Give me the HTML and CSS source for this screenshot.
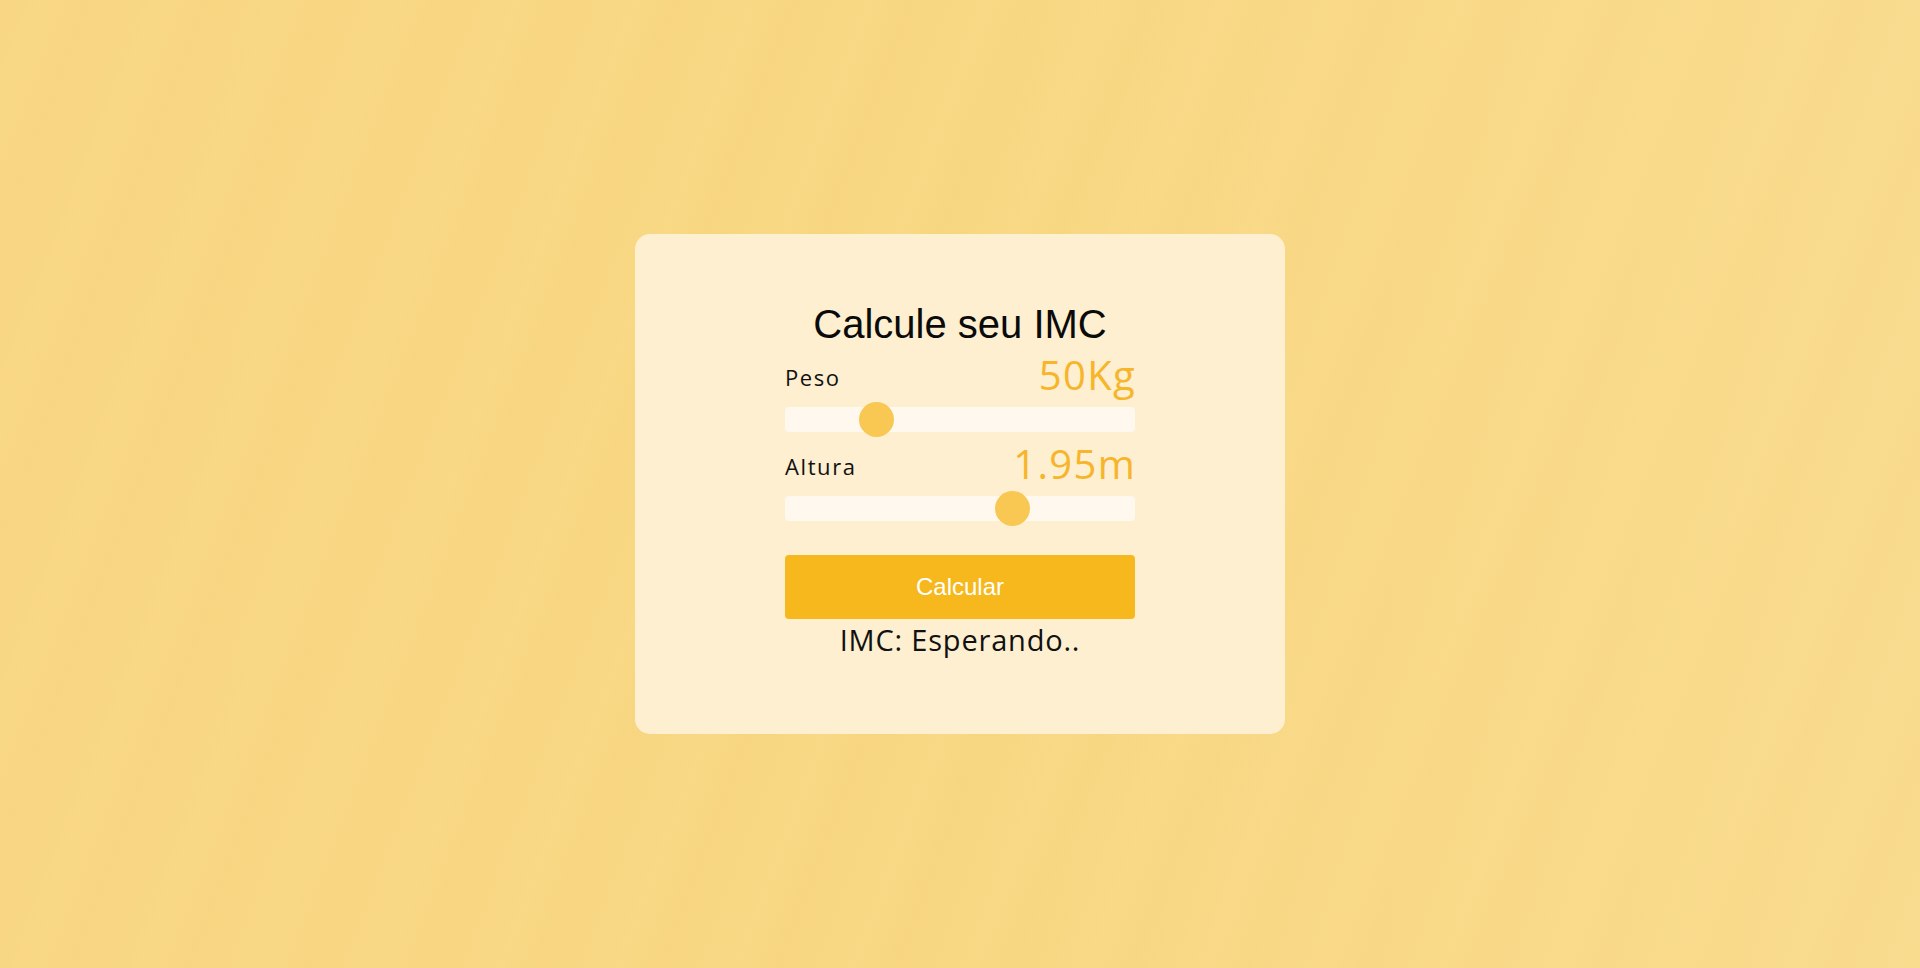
FILE: index.html
```html
<!DOCTYPE html>
<html lang="pt-BR">
<head>
<meta charset="utf-8">
<title>Calculadora de IMC</title>
<link rel="stylesheet" href="styles.css">
</head>
<body>
  <main class="card">
    <h1 class="title">Calcule seu IMC</h1>
    <div class="field">
      <div class="field-head">
        <label class="field-label" for="peso">Peso</label>
        <span class="field-value">50Kg</span>
      </div>
      <input class="slider" id="peso" type="range" min="30" max="115" step="1" value="50">
    </div>
    <div class="field field-second">
      <div class="field-head">
        <label class="field-label" for="altura">Altura</label>
        <span class="field-value">1.95m</span>
      </div>
      <input class="slider" id="altura" type="range" min="1" max="2.425" step="0.005" value="1.95">
    </div>
    <button class="btn" type="button">Calcular</button>
    <p class="result">IMC: Esperando..</p>
  </main>
</body>
</html>
```
FILE: styles.css
```css
* { box-sizing: border-box; }

html, body { height: 100%; }

body {
  margin: 0;
  display: flex;
  align-items: center;
  justify-content: center;
  background-color: #f8d884;
  background-image:
    repeating-linear-gradient(111deg,
      rgba(255, 230, 150, 0.00) 0px,
      rgba(255, 228, 150, 0.12) 45px,
      rgba(240, 200, 110, 0.06) 80px,
      rgba(255, 230, 150, 0.00) 110px),
    linear-gradient(90deg, #f8d683 0%, #f8d782 50%, #f9db8e 100%);
  font-family: "Open Sans", "Noto Sans", sans-serif;
  color: #000;
}

.card {
  width: 650px;
  height: 500px;
  padding-top: 67px;
  border-radius: 15px;
  background: #fdefcf;
  display: flex;
  flex-direction: column;
  align-items: center;
}

.title {
  margin: 0;
  font-family: "Liberation Sans", Arial, sans-serif;
  font-weight: 400;
  font-size: 40px;
  line-height: 46px;
  color: #0a0a0a;
}

.field {
  width: 350px;
  display: flex;
  flex-direction: column;
}

.field-head {
  height: 56px;
  margin-top: 2px;
  display: flex;
  align-items: center;
  justify-content: space-between;
}

.field-second .field-head { margin-top: 6px; }

.field-label {
  font-size: 22px;
  line-height: 30px;
  letter-spacing: 1.6px;
  color: #111;
}

.field-value {
  font-size: 40px;
  line-height: 56px;
  letter-spacing: 1.3px;
  margin-right: -1px;
  color: #f6b52a;
  position: relative;
  top: -2px;
}

.slider {
  -webkit-appearance: none;
  appearance: none;
  display: block;
  margin: 2px 0 0;
  width: 350px;
  height: 25px;
  border-radius: 4px;
  background: #fef8ef;
  outline: none;
  padding: 0;
}

.slider::-webkit-slider-thumb {
  -webkit-appearance: none;
  appearance: none;
  width: 35px;
  height: 35px;
  border-radius: 50%;
  background: #f8c853;
  border: none;
  cursor: pointer;
}

.btn {
  margin-top: 34px;
  width: 350px;
  height: 64px;
  border: none;
  border-radius: 4px;
  background: #f6b81c;
  color: #fff;
  font-family: "Liberation Sans", Arial, sans-serif;
  font-size: 24px;
  line-height: 64px;
  padding: 0;
  cursor: pointer;
}

.result {
  margin: 1px 0 0;
  font-size: 29px;
  line-height: 40px;
  letter-spacing: 0.8px;
  color: #111;
}
```
